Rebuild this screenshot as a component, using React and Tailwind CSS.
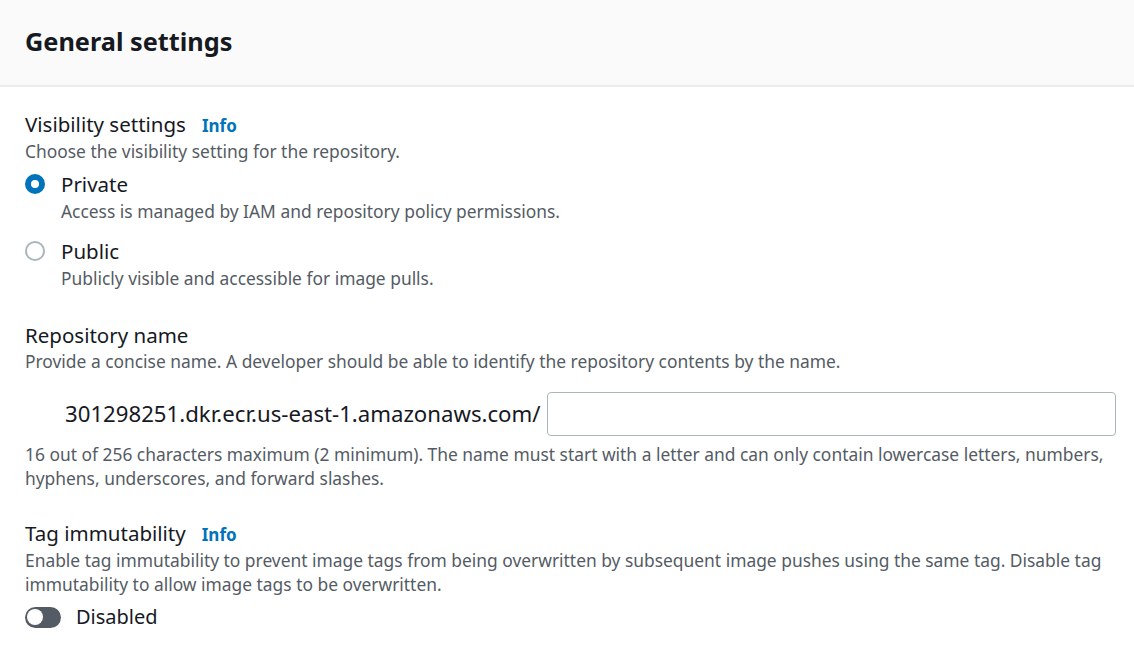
import React from "react";

function Info() {
  return <span className="ml-4 text-[17px] font-bold text-[#0073bb]">Info</span>;
}

function Radio({ checked, label, desc }) {
  return (
    <div className="flex">
      <div className="w-[36px] pt-[4px]">
        {checked ? (
          <div className="w-[20px] h-[20px] rounded-full bg-[#0073bb] flex items-center justify-center">
            <div className="w-[8px] h-[8px] rounded-full bg-white"></div>
          </div>
        ) : (
          <div className="w-[20px] h-[20px] rounded-full border-2 border-[#aab7b8] bg-white"></div>
        )}
      </div>
      <div>
        <div className="text-[20.5px] leading-[29px] text-[#16191f]">{label}</div>
        <div className="text-[17.4px] leading-[24px] text-[#545b64]">{desc}</div>
      </div>
    </div>
  );
}

export default function App() {
  return (
    <div className="w-[1134px] h-[659px] bg-white font-['Noto_Sans',sans-serif] overflow-hidden">
      {/* Header */}
      <div className="h-[87px] bg-[#fafafa] border-b-2 border-[#eaeded] px-[25px] pb-[1px] flex items-center">
        <h2 className="text-[25.3px] font-bold text-[#16191f]">General settings</h2>
      </div>

      <div className="pl-[25px] pr-[18px] pt-[24px]">
        {/* Visibility */}
        <div className="text-[20.5px] leading-[27px] text-[#16191f] flex items-baseline">
          Visibility settings <Info />
        </div>
        <div className="text-[17.4px] leading-[24px] text-[#545b64]">
          Choose the visibility setting for the repository.
        </div>
        <div className="mt-[7px] flex flex-col gap-[14px]">
          <Radio checked label="Private" desc="Access is managed by IAM and repository policy permissions." />
          <Radio label="Public" desc="Publicly visible and accessible for image pulls." />
        </div>

        {/* Repository name */}
        <div className="mt-[31px] text-[20.5px] leading-[28px] text-[#16191f]">Repository name</div>
        <div className="text-[17.4px] leading-[24px] text-[#545b64]">
          Provide a concise name. A developer should be able to identify the repository contents by the name.
        </div>
        <div className="mt-[19px] flex items-center">
          <span className="w-[40px]"></span>
          <span className="text-[22.2px] text-[#16191f] whitespace-nowrap">301298251.dkr.ecr.us-east-1.amazonaws.com/</span>
          <div className="ml-[6px] flex-1 h-[44px] border border-[#aab7b8] rounded-[4px] bg-white"></div>
        </div>
        <div className="mt-[6px] text-[17.4px] leading-[24px] text-[#545b64]">
          16 out of 256 characters maximum (2 minimum). The name must start with a letter and can only contain lowercase letters, numbers, hyphens, underscores, and forward slashes.
        </div>

        {/* Tag immutability */}
        <div className="mt-[30px] text-[20.5px] leading-[27px] text-[#16191f] flex items-baseline">
          Tag immutability <Info />
        </div>
        <div className="text-[17.4px] leading-[24px] text-[#545b64]">
          Enable tag immutability to prevent image tags from being overwritten by subsequent image pushes using the same tag. Disable tag immutability to allow image tags to be overwritten.
        </div>
        <div className="mt-[6px] flex items-center">
          <div className="w-[36px] h-[21px] rounded-full bg-[#545b64] flex items-center px-[2px]">
            <div className="w-[16px] h-[16px] rounded-full bg-white"></div>
          </div>
          <span className="ml-[15px] text-[20px] leading-[30px] text-[#16191f]">Disabled</span>
        </div>
      </div>
    </div>
  );
}
